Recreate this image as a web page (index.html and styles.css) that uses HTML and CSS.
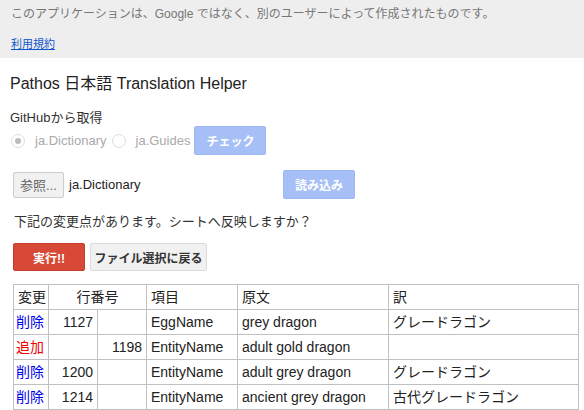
FILE: index.html
```html
<!DOCTYPE html>
<html lang="ja">
<head>
<meta charset="utf-8">
<link rel="stylesheet" href="styles.css">
</head>
<body>
<div class="notice">
  <div class="notice-text">このアプリケーションは、Google ではなく、別のユーザーによって作成されたものです。</div>
  <a class="notice-link" href="#">利用規約</a>
</div>
<main class="app">
  <h1 class="title">Pathos 日本語 Translation Helper</h1>
  <div class="label">GitHubから取得</div>
  <div class="radio-row">
    <label class="radio"><span class="dot checked"></span>ja.Dictionary</label>
    <label class="radio"><span class="dot"></span>ja.Guides</label>
    <button class="btn btn-blue btn-check">チェック</button>
  </div>
  <div class="file-row">
    <span class="btn-file">参照...</span>
    <span class="file-name">ja.Dictionary</span>
    <button class="btn btn-blue btn-load">読み込み</button>
  </div>
  <p class="question">下記の変更点があります。シートへ反映しますか？</p>
  <div class="action-row">
    <button class="btn btn-red">実行!!</button>
    <button class="btn btn-gray">ファイル選択に戻る</button>
  </div>
  <table class="diff">
    <colgroup>
      <col class="c1"><col class="c2"><col class="c3"><col class="c4"><col class="c5"><col class="c6">
    </colgroup>
    <tr><td>変更</td><td colspan="2" class="center">行番号</td><td>項目</td><td>原文</td><td>訳</td></tr>
    <tr><td class="del">削除</td><td class="num">1127</td><td></td><td>EggName</td><td>grey dragon</td><td>グレードラゴン</td></tr>
    <tr><td class="add">追加</td><td></td><td class="num">1198</td><td>EntityName</td><td>adult gold dragon</td><td></td></tr>
    <tr><td class="del">削除</td><td class="num">1200</td><td></td><td>EntityName</td><td>adult grey dragon</td><td>グレードラゴン</td></tr>
    <tr><td class="del">削除</td><td class="num">1214</td><td></td><td>EntityName</td><td>ancient grey dragon</td><td>古代グレードラゴン</td></tr>
  </table>
</main>
</body>
</html>
```
FILE: styles.css
```css
* { box-sizing: border-box; }
html, body { margin: 0; padding: 0; background: #fff; }
body {
  font-family: "Liberation Sans", Arial, "Noto Sans CJK JP", sans-serif;
  color: #222;
  width: 584px;
  height: 410px;
  overflow: hidden;
}
.notice {
  background: #eeeeee;
  height: 58px;
  padding: 6px 11px 0;
}
.notice-text {
  font-size: 12px;
  line-height: 16px;
  color: #777;
}
.notice-link {
  display: inline-block;
  margin-top: 14px;
  font-size: 11px;
  line-height: 16px;
  color: #1155cc;
  text-decoration: underline;
}
.app { padding: 0 0 0 10px; }
.title {
  margin: 15px 0 0;
  font-size: 16px;
  font-weight: normal;
  line-height: 22px;
  color: #222;
}
.label {
  margin-top: 15px;
  font-size: 13px;
  line-height: 16px;
  color: #333;
}
.radio-row {
  display: flex;
  align-items: center;
  margin-top: 0;
  height: 29px;
}
.radio {
  display: flex;
  align-items: center;
  font-size: 13px;
  color: #aaa;
  margin-right: 4px;
}
.dot {
  width: 14px;
  height: 14px;
  border: 1px solid #ddd;
  border-radius: 50%;
  margin: 0 10px 0 1px;
  position: relative;
  background: #fff;
}
.dot.checked::after {
  content: "";
  position: absolute;
  left: 3px; top: 3px;
  width: 6px; height: 6px;
  border-radius: 50%;
  background: #bbb;
}
.btn {
  font-family: inherit;
  border-radius: 2px;
  font-size: 12px;
  font-weight: bold;
  padding: 0;
  cursor: pointer;
}
.btn-blue {
  background: #a6c0f7;
  border: 1px solid #9db8f2;
  color: #fff;
  width: 72px;
  height: 29px;
}
.file-row {
  display: flex;
  align-items: center;
  margin-top: 15px;
  padding-left: 3px;
  height: 29px;
}
.btn-file {
  display: inline-flex;
  align-items: center;
  justify-content: center;
  width: 51px;
  height: 26px;
  border: 1px solid #ccc;
  border-radius: 2px;
  background: #f1f1f1;
  color: #666;
  font-size: 13px;
}
.file-name {
  font-size: 13px;
  margin-left: 5px;
  width: 214px;
  color: #222;
}
.question {
  margin: 13px 0 0 4px;
  font-size: 13px;
  line-height: 20px;
  color: #333;
}
.action-row {
  display: flex;
  gap: 5px;
  margin-top: 11px;
  padding-left: 3px;
}
.btn-red {
  width: 72px;
  height: 28px;
  background: #d74936;
  border: 1px solid #c23d2b;
  color: #fff;
}
.btn-gray {
  width: 117px;
  height: 28px;
  background: #f1f1f1;
  border: 1px solid #dcdcdc;
  color: #333;
}
.diff {
  margin: 13px 0 0 3px;
  border-collapse: collapse;
  table-layout: fixed;
  width: 565px;
  font-size: 14px;
}
.diff td {
  border: 1px solid #c0c0c0;
  height: 25px;
  padding: 0 4px;
  line-height: 18px;
  white-space: nowrap;
  color: #222;
}
.c1 { width: 35px; }
.c2 { width: 49px; }
.c3 { width: 49px; }
.c4 { width: 91px; }
.c5 { width: 151px; }
.c6 { width: 190px; }
.diff td.center { text-align: center; }
.diff td.num { text-align: right; }
.diff td.del { color: #0000ee; padding: 0 2px; }
.diff td.add { color: #ee0000; padding: 0 2px; }
```
